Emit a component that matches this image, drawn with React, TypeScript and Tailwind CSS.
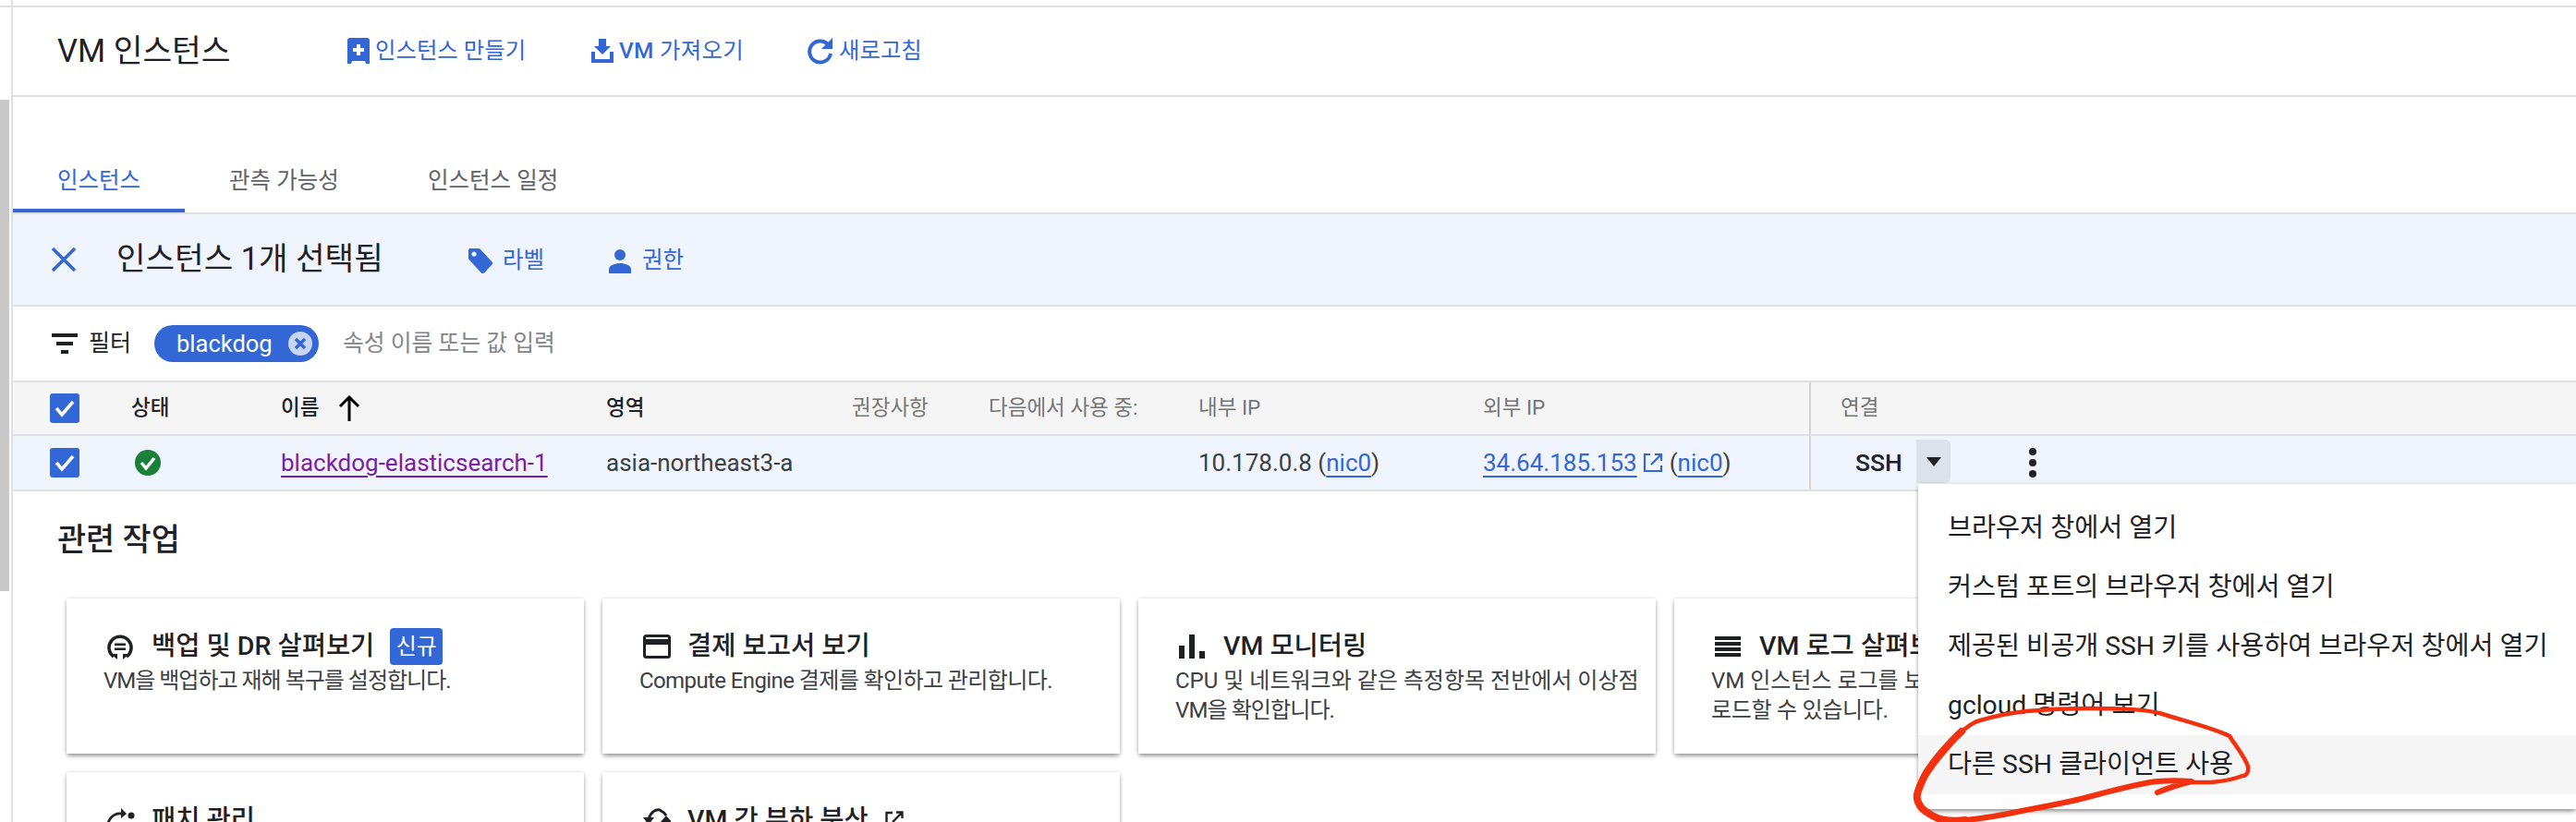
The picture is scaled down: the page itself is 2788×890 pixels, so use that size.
import React from "react";

const FONT = "[font-family:Roboto,'Noto_Sans_CJK_KR',sans-serif]";

function PlusDoc() {
  return (
    <svg width="24" height="28" viewBox="0 0 24 28" className="shrink-0">
      <path d="M3 0h18a3 3 0 0 1 3 3v25h-4l-1-3H5l-1 3H0V3a3 3 0 0 1 3-3z" fill="#3367d6" />
      <path d="M10 7h4v4h4v4h-4v4h-4v-4H6v-4h4z" fill="#fff" />
    </svg>
  );
}
function ImportIcon() {
  return (
    <svg width="24" height="26" viewBox="0 0 24 26" className="shrink-0">
      <path d="M8 0h8v8h5l-9 9-9-9h5zM0 14h4v8h16v-8h4v12H0z" fill="#3367d6" />
    </svg>
  );
}
function RefreshIcon() {
  return (
    <svg width="28" height="30" viewBox="0 0 28 30" className="shrink-0">
      <path d="M22 8a11.5 11.5 0 1 0 3 10" fill="none" stroke="#3367d6" strokeWidth="4" />
      <path d="M27 1v12H15z" fill="#3367d6" />
    </svg>
  );
}
function Check({ className = "" }: { className?: string }) {
  return (
    <svg width="32" height="32" viewBox="0 0 32 32" className={className}>
      <rect width="32" height="32" rx="3" fill="#3367d6" />
      <path d="M7 16l6 7 12-14" fill="none" stroke="#fff" strokeWidth="3.5" />
    </svg>
  );
}
function Action({ icon, children, className = "" }: { icon: React.ReactNode; children: React.ReactNode; className?: string }) {
  return (
    <div className={`flex items-center gap-[6px] text-[24.4px] text-[#3367d6] ${className}`}>
      {icon}
      <span>{children}</span>
    </div>
  );
}
function Card({ icon, title, badge, desc, ext }: { icon: React.ReactNode; title: string; badge?: string; desc?: React.ReactNode; ext?: boolean }) {
  return (
    <div className="w-[560px] h-[168px] shrink-0 bg-white shadow-[0_3px_5px_-1px_rgba(0,0,0,0.45),0_0_4px_rgba(0,0,0,0.12)] px-10 pt-[32px]">
      <div className="flex items-center h-[40px]">
        <div className="w-[52px] shrink-0 pl-[4px] flex items-center">{icon}</div>
        <span className="text-[28.5px] text-[#202124] font-medium whitespace-nowrap">{title}</span>
        {ext && (
          <svg width="20" height="20" viewBox="0 0 20 20" className="ml-[18px]">
            <path d="M8 2H1.5v17h17v-7M12 1.5h6.5V8M18 2L8 12" fill="none" stroke="#202124" strokeWidth="2.4" />
          </svg>
        )}
        {badge && (
          <span className="ml-[17px] w-[57px] h-[40px] rounded-[4px] bg-[#3367d6] text-white text-[24px] flex items-center justify-center">
            {badge}
          </span>
        )}
      </div>
      <div className="text-[24px] leading-[32px] text-[#3c4043] mt-[1px] whitespace-nowrap">{desc}</div>
    </div>
  );
}

const menuItems = [
  "브라우저 창에서 열기",
  "커스텀 포트의 브라우저 창에서 열기",
  "제공된 비공개 SSH 키를 사용하여 브라우저 창에서 열기",
  "gcloud 명령어 보기",
  "다른 SSH 클라이언트 사용",
];

export default function App() {
  return (
    <div className={`relative w-[2788px] h-[890px] overflow-hidden bg-white flex ${FONT}`}>
      {/* scrollbar gutter */}
      <div className="w-[14px] shrink-0 flex flex-col border-r-2 border-[#e0e0e0] pt-[108px]">
        <div className="w-[10px] h-[532px] bg-[#c8c8c8]" />
      </div>
      <div className="flex-1 min-w-0">
        <div className="h-[6px]" />
        <div className="h-[2px] bg-[#e0e0e0] -ml-[14px]" />
        {/* header */}
        <div className="h-[97px] flex items-center pl-[48px] border-b-2 border-[#e0e0e0]">
          <h1 className="text-[34.5px] text-[#202124] w-[314px] whitespace-nowrap">VM 인스턴스</h1>
          <Action icon={<PlusDoc />} className="w-[264px]">인스턴스 만들기</Action>
          <Action icon={<ImportIcon />} className="w-[234px] tracking-[0.3px]">
            <span className="font-medium">VM</span> 가져오기
          </Action>
          <Action icon={<RefreshIcon />} className="gap-[5px]">새로고침</Action>
        </div>
        {/* spacer + tabs */}
        <div className="h-[63px]" />
        <div className="h-[64px] flex border-b-2 border-[#e0e0e0] text-[24.5px] text-[#5f6368]">
          <div className="w-[186px] h-[62px] pl-[48px] pt-[10px] border-b-4 border-[#3367d6] text-[#3367d6]">인스턴스</div>
          <div className="w-[215px] pl-[48px] pt-[10px]">관측 가능성</div>
          <div className="pl-[48px] pt-[10px]">인스턴스 일정</div>
        </div>
        {/* selection bar */}
        <div className="h-[100px] bg-[#f0f4fc] border-b-2 border-[#e0e0e0] flex items-center pl-[41px]">
          <svg width="28" height="28" viewBox="0 0 28 28" className="shrink-0">
            <path d="M2 2l24 24M26 2L2 26" stroke="#3367d6" strokeWidth="3.5" fill="none" />
          </svg>
          <span className="ml-[43px] w-[381px] text-[34.3px] text-[#202124] whitespace-nowrap">인스턴스 1개 선택됨</span>
          <div className="flex items-center gap-[11px] text-[24.5px] text-[#3367d6] w-[152px] pt-[3px]">
            <svg width="26" height="27" viewBox="0 0 26 27">
              <path d="M2 0h9a2 2 0 0 1 1.5.6l13 14a2 2 0 0 1 0 2.8l-8.500 9a2 2 0 0 1-3 0L.6 12A2 2 0 0 1 0 10.500V2a2 2 0 0 1 2-2z" fill="#3367d6" />
              <circle cx="6" cy="6" r="2.600" fill="#f0f4fc" />
            </svg>
            <span>라벨</span>
          </div>
          <div className="flex items-center gap-[12px] text-[24.5px] text-[#3367d6] pt-[3px]">
            <svg width="24" height="26" viewBox="0 0 24 26">
              <circle cx="12" cy="6" r="6" fill="#3367d6" />
              <path d="M0 26v-4c0-5 7-7 12-7s12 2 12 7v4z" fill="#3367d6" />
            </svg>
            <span>권한</span>
          </div>
        </div>
        {/* filter */}
        <div className="h-[80px] flex items-center pl-[42px]">
          <svg width="28" height="22" viewBox="0 0 28 22" className="shrink-0">
            <path d="M0 0h28v4H0zM5 9h18v4H5zM10 18h8v4h-8z" fill="#202124" />
          </svg>
          <span className="ml-[12px] text-[25px] text-[#202124]">필터</span>
          <div className="ml-[25px] w-[178px] h-[40px] rounded-full bg-[#3367d6] text-white text-[25.5px] flex items-center pl-[24px] justify-between pr-[6px]">
            <span>blackdog</span>
            <svg width="28" height="28" viewBox="0 0 28 28">
              <circle cx="14" cy="14" r="13" fill="#c6d5f3" />
              <path d="M9 9l10 10M19 9L9 19" stroke="#3367d6" strokeWidth="3.5" />
            </svg>
          </div>
          <span className="ml-[26px] text-[24.800px] text-[#80868b]">속성 이름 또는 값 입력</span>
        </div>
        {/* table */}
        <div className="h-[60px] bg-[#f5f5f5] border-y-2 border-[#e0e0e0] flex items-center text-[22.500px] text-[#202124] font-medium">
          <div className="w-[128px] pl-[40px] shrink-0">
            <Check className="block" />
          </div>
          <div className="w-[162px] shrink-0">상태</div>
          <div className="w-[352px] shrink-0 flex items-center gap-[20px]">
            이름
            <svg width="26" height="28" viewBox="0 0 26 28">
              <path d="M13 28V3M3 12l10-10 10 10" fill="none" stroke="#000" strokeWidth="3" />
            </svg>
          </div>
          <div className="w-[266px] shrink-0">영역</div>
          <div className="w-[148px] shrink-0 text-[#757575] font-normal whitespace-nowrap">권장사항</div>
          <div className="w-[227px] shrink-0 text-[#757575] font-normal whitespace-nowrap">다음에서 사용 중:</div>
          <div className="w-[308px] shrink-0 text-[#757575] font-normal">내부 IP</div>
          <div className="w-[355px] shrink-0 text-[#757575] font-normal h-full flex items-center border-r-2 border-[#d4d4d4]">외부 IP</div>
          <div className="pl-[32px] text-[#757575] font-normal">연결</div>
        </div>
        <div className="h-[60px] bg-[#f0f4fc] border-b-2 border-[#e0e0e0] flex items-center text-[26px] text-[#3c4043]">
          <div className="w-[128px] pl-[40px] shrink-0">
            <Check className="block" />
          </div>
          <div className="w-[162px] shrink-0 pl-[3px]">
            <svg width="30" height="30" viewBox="0 0 30 30">
              <circle cx="15" cy="15" r="14" fill="#188038" />
              <path d="M8 15l5 6 9-11" fill="none" stroke="#fff" strokeWidth="3.5" />
            </svg>
          </div>
          <div className="w-[352px] shrink-0">
            <span className="text-[#7b1fa2] underline underline-offset-[5px] decoration-2 whitespace-nowrap">blackdog-elasticsearch-1</span>
          </div>
          <div className="w-[641px] shrink-0">asia-northeast3-a</div>
          <div className="w-[308px] shrink-0 whitespace-nowrap">
            10.178.0.8 (<span className="text-[#3367d6] underline underline-offset-[5px] decoration-2">nic0</span>)
          </div>
          <div className="w-[355px] shrink-0 h-full flex items-center border-r-2 border-[#d4d4d4] whitespace-nowrap">
            <span className="text-[#3367d6] underline underline-offset-[5px] decoration-2">34.64.185.153</span>
            <svg width="22" height="22" viewBox="0 0 22 22" className="ml-[6px] mr-[7px]">
              <path d="M8 2H2v18h18v-6M13 2h7v7M20 2L9 13" fill="none" stroke="#3367d6" strokeWidth="2.2" />
            </svg>
            (<span className="text-[#3367d6] underline underline-offset-[5px] decoration-2">nic0</span>)
          </div>
          <div className="pl-[48px] flex items-center h-full">
            <span className="text-[#202124] font-medium w-[66px] text-[26.5px]">SSH</span>
            <div className="w-[37px] h-[47px] mb-[3px] bg-[#dde1ea] rounded-r-[6px] flex items-center justify-center">
              <svg width="16" height="10" viewBox="0 0 16 10"><path d="M0 0h16L8 10z" fill="#202124" /></svg>
            </div>
            <svg width="10" height="32" viewBox="0 0 10 32" className="ml-[84px]">
              <circle cx="5" cy="4" r="4" fill="#202124" />
              <circle cx="5" cy="16" r="4" fill="#202124" />
              <circle cx="5" cy="28" r="4" fill="#202124" />
            </svg>
          </div>
        </div>
        {/* related actions */}
        <h2 className="pl-[48px] mt-[33px] text-[33.800px] leading-[40px] text-[#202124] font-medium">관련 작업</h2>
        <div className="ml-[58px] mt-[43px] grid grid-cols-[repeat(4,560px)] gap-x-[20px] gap-y-[20px]">
          <Card
            icon={
              <svg width="28" height="28" viewBox="0 0 28 28">
                <path d="M7 25a12 12 0 1 1 14 0" fill="none" stroke="#202124" strokeWidth="3.5" />
                <path d="M8 10.500h12v2.500H8zM8 15.500h12v2.500H8zM4 22h7v6zM24 22h-7v6z" fill="#202124" />
              </svg>
            }
            title="백업 및 DR 살펴보기"
            badge="신규"
            desc={<div className="tracking-[-1px]">VM을 백업하고 재해 복구를 설정합니다.</div>}
          />
          <Card
            icon={
              <svg width="30" height="26" viewBox="0 0 30 26">
                <rect x="1.500" y="1.500" width="27" height="23" rx="2" fill="none" stroke="#202124" strokeWidth="3" />
                <rect x="2" y="5" width="26" height="6" fill="#202124" />
              </svg>
            }
            title="결제 보고서 보기"
            desc={<div className="tracking-[-0.6px]">Compute Engine 결제를 확인하고 관리합니다.</div>}
          />
          <Card
            icon={
              <svg width="28" height="26" viewBox="0 0 28 26">
                <path d="M0 12h6v14H0zM11 0h6v26h-6zM22 18h6v8h-6z" fill="#202124" />
              </svg>
            }
            title="VM 모니터링"
            desc={
              <>
                <div>CPU 및 네트워크와 같은 측정항목 전반에서 이상점</div>
                <div className="tracking-[-0.9px]">VM을 확인합니다.</div>
              </>
            }
          />
          <Card
            icon={
              <svg width="28" height="22" viewBox="0 0 28 22">
                <path d="M0 0h28v4H0zM0 6h28v4H0zM0 12h28v4H0zM0 18h28v4H0z" fill="#202124" />
              </svg>
            }
            title="VM 로그 살펴보기"
            desc={
              <>
                <div>VM 인스턴스 로그를 보고 검색하고 필터링하고 다운</div>
                <div className="tracking-[-0.3px]">로드할 수 있습니다.</div>
              </>
            }
          />
          <Card
            icon={
              <svg width="30" height="30" viewBox="0 0 30 30">
                <path d="M2 26a13 13 0 0 1 14-18" fill="none" stroke="#202124" strokeWidth="2.800" />
                <path d="M15 2l6 6-6 5z" fill="#202124" />
                <circle cx="26" cy="10" r="3.500" fill="#202124" />
                <circle cx="14" cy="24" r="3.500" fill="none" stroke="#202124" strokeWidth="2.500" />
              </svg>
            }
            title="패치 관리"
          />
          <Card
            icon={
              <svg width="30" height="30" viewBox="0 0 30 30">
                <path d="M6 14C8 6 14 3 18 4C20 5 23 7 25 10" fill="none" stroke="#202124" strokeWidth="3" />
                <path d="M0 12h12l-6 8zM18 18l7-8 7 8z" fill="#202124" />
              </svg>
            }
            title="VM 간 부하 분산"
            ext
          />
        </div>
      </div>

      {/* SSH dropdown menu */}
      <div className="absolute left-[2076px] top-[524px] w-[712px] h-[352px] bg-white shadow-[0_3px_5px_-1px_rgba(0,0,0,0.45),0_0_4px_rgba(0,0,0,0.12)] py-[16px]">
        {menuItems.map((m, i) => (
          <div
            key={m}
            className={`h-[64px] pl-[32px] flex items-center text-[28.300px] text-[#202124] whitespace-nowrap ${i === 4 ? "bg-[#f5f5f5]" : ""}`}
          >
            {m}
          </div>
        ))}
      </div>

      {/* red hand-drawn annotation */}
      <svg className="absolute left-0 top-0 pointer-events-none" width="2788" height="890" viewBox="0 0 2788 890">
        <g fill="none" stroke="#f4300f" strokeLinecap="round" strokeLinejoin="round">
          <path
            strokeWidth="4.5"
            d="M2123 792C2132 785 2136 782 2143 780C2160 775 2175 772 2193 770C2215 768 2238 767 2260 767C2290 767 2315 767 2337 772C2365 781 2395 788 2413 797C2420 808 2430 820 2433 830C2434 838 2430 840 2427 840C2415 845 2405 846 2393 847C2385 847 2378 847 2372 847"
          />
          <path
            strokeWidth="6"
            d="M2335 858C2347 853 2360 849 2372 846C2355 845 2340 845 2327 847C2305 851 2282 857 2260 863C2237 869 2215 873 2193 877C2170 882 2148 886 2127 888"
          />
          <path
            strokeWidth="8"
            d="M2127 888C2118 889 2108 889 2100 887C2092 884 2085 880 2080 875C2076 870 2074 865 2075 860C2077 852 2080 846 2083 840C2089 830 2096 821 2103 813C2110 805 2116 798 2123 792"
          />
        </g>
      </svg>
    </div>
  );
}
